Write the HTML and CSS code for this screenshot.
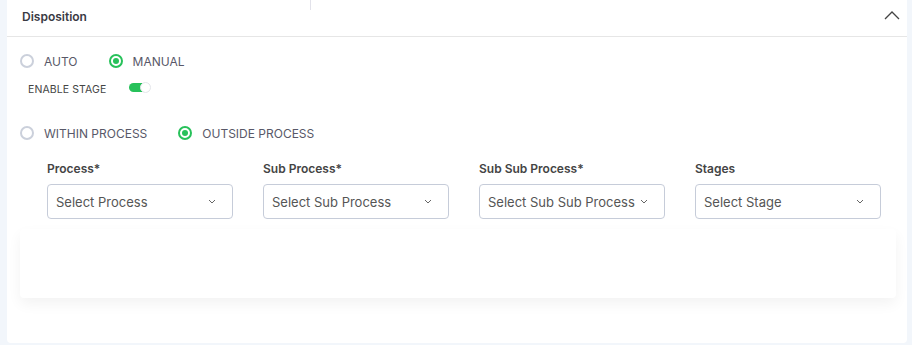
FILE: index.html
```html
<!DOCTYPE html>
<html lang="en">
<head>
<meta charset="UTF-8" />
<title>Disposition</title>
<link rel="stylesheet" href="styles.css">
</head>
<body>

<div class="card">
  <div class="card-header">
    <span class="card-title">Disposition</span>
    <svg class="collapse-icon" width="16" height="10" viewBox="0 0 16 10">
      <path d="M1 9 L8 2 L15 9" fill="none" stroke="#444" stroke-width="1.3"/>
    </svg>
  </div>

  <div class="card-body">
    <div class="radio-row">
      <label class="radio"><span class="dot"></span>AUTO</label>
      <label class="radio checked"><span class="dot"></span>MANUAL</label>
    </div>

    <div class="toggle-row">
      <span class="toggle-label">ENABLE STAGE</span>
      <span class="switch on"><span class="knob"></span></span>
    </div>

    <div class="radio-row second">
      <label class="radio"><span class="dot"></span>WITHIN PROCESS</label>
      <label class="radio checked"><span class="dot"></span>OUTSIDE PROCESS</label>
    </div>

    <div class="field-grid">
      <div class="field">
        <div class="field-label">Process*</div>
        <div class="select">Select Process<svg width="8" height="5" viewBox="0 0 8 5"><path d="M1 1 L4 4 L7 1" fill="none" stroke="#666" stroke-width="1"/></svg></div>
      </div>
      <div class="field">
        <div class="field-label">Sub Process*</div>
        <div class="select">Select Sub Process<svg width="8" height="5" viewBox="0 0 8 5"><path d="M1 1 L4 4 L7 1" fill="none" stroke="#666" stroke-width="1"/></svg></div>
      </div>
      <div class="field">
        <div class="field-label">Sub Sub Process*</div>
        <div class="select">Select Sub Sub Process<svg width="8" height="5" viewBox="0 0 8 5"><path d="M1 1 L4 4 L7 1" fill="none" stroke="#666" stroke-width="1"/></svg></div>
      </div>
      <div class="field">
        <div class="field-label">Stages</div>
        <div class="select">Select Stage<svg width="8" height="5" viewBox="0 0 8 5"><path d="M1 1 L4 4 L7 1" fill="none" stroke="#666" stroke-width="1"/></svg></div>
      </div>
    </div>

    <div class="empty-panel"></div>
  </div>
</div>

</body>
</html>
```

FILE: styles.css
```css
body {
  margin: 0;
  background: #f2f6fb;
  font-family: Inter, "Noto Sans", sans-serif;
  color: #444;
}
.card {
  margin-left: 7px;
  width: 900px;
  height: 343px;
  background: #fff;
  border-radius: 0 0 4px 4px;
  position: relative;
}
.card::before {
  content: '';
  position: absolute;
  left: 303px;
  top: 0;
  width: 1px;
  height: 10px;
  background: #e2e2ea;
}
.card-header {
  height: 36px;
  display: flex;
  align-items: center;
  justify-content: space-between;
  padding: 0 7px 0 15px;
  border-bottom: 1px solid #e6e6e6;
}
.card-title {
  font-size: 12px;
  font-weight: 600;
  color: #3a3a44;
  margin-top: -3px;
}
.collapse-icon {
  margin-top: -7px;
}
.card-body {
  padding: 17px 11px 0 13px;
}
.radio-row {
  display: flex;
  gap: 31px;
  height: 14px;
  align-items: center;
}
.radio-row.second {
  margin-top: 32px;
}
.radio {
  display: flex;
  align-items: center;
  gap: 10px;
  font-size: 12px;
  color: #585868;
}
.dot {
  width: 14px;
  height: 14px;
  box-sizing: border-box;
  border: 2px solid #cbd0db;
  border-radius: 50%;
  display: flex;
  align-items: center;
  justify-content: center;
  background: #fff;
}
.radio.checked .dot {
  border-color: #27c15a;
}
.radio.checked .dot::after {
  content: '';
  width: 6px;
  height: 6px;
  border-radius: 50%;
  background: #27c15a;
}
.toggle-row {
  display: flex;
  align-items: center;
  margin: 16px 0 0 8px;
  height: 10px;
}
.toggle-label {
  font-size: 10.5px;
  color: #444;
  width: 101px;
  letter-spacing: 0.1px;
}
.switch {
  width: 21px;
  height: 9px;
  border-radius: 5px;
  background: #27c15a;
  position: relative;
  display: inline-block;
  margin-top: -3px;
}
.switch .knob {
  position: absolute;
  right: -1px;
  top: -1px;
  width: 9px;
  height: 9px;
  border-radius: 50%;
  background: #fff;
  border: 1px solid #e4e6ea;
}
.field-grid {
  display: grid;
  grid-template-columns: repeat(4, 186px);
  column-gap: 30px;
  margin: 21px 0 0 27px;
}
.field-label {
  font-size: 12px;
  font-weight: 600;
  color: #444;
  height: 17px;
  margin-bottom: 6px;
}
.select {
  height: 35px;
  box-sizing: border-box;
  border: 1px solid #c6ccd9;
  border-radius: 4px;
  display: flex;
  align-items: center;
  justify-content: space-between;
  padding: 0 16px 0 8px;
  font-size: 13px;
  color: #555;
}
.empty-panel {
  margin-top: 10px;
  height: 69px;
  border-radius: 4px;
  background: #fff;
  box-shadow: 0 6px 14px rgba(0, 0, 0, 0.05);
}
```
